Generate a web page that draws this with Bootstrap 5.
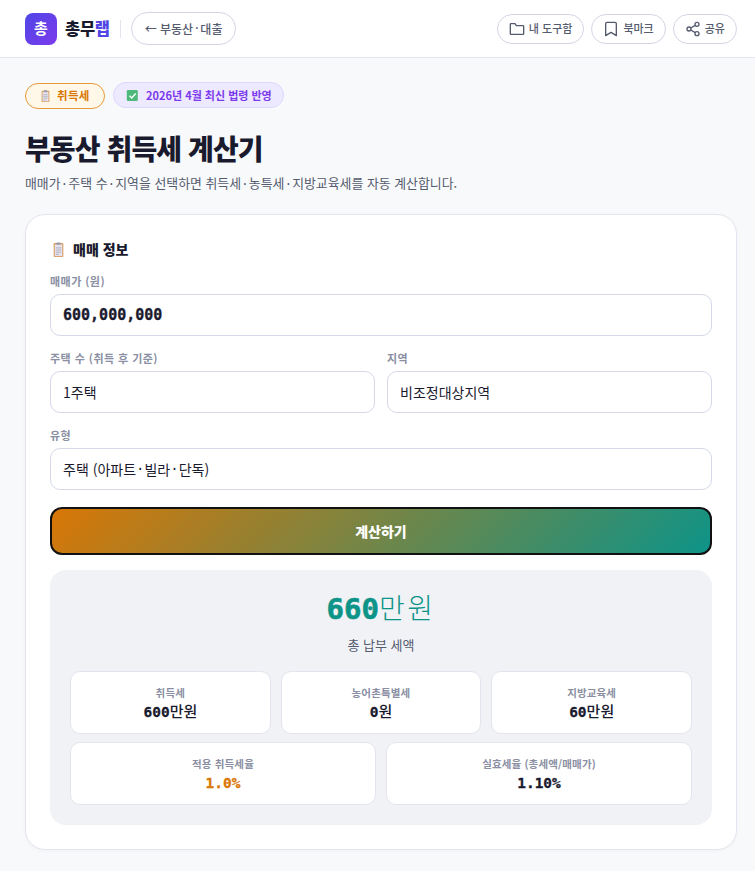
<!DOCTYPE html>
<html lang="ko"><head><meta charset="utf-8">
<title>부동산 취득세 계산기</title>
<link href="https://cdn.jsdelivr.net/npm/bootstrap@5.3.0/dist/css/bootstrap.min.css" rel="stylesheet">
<style>
html,body{height:871px;overflow:hidden}
body{background:#f8f9fb;font-family:"Noto Sans CJK KR","Noto Sans",sans-serif;color:#1a1a2e}
.mid{font-family:"Liberation Mono",monospace;font-weight:inherit}
.topbar{height:58px;background:#fff;border-bottom:1px solid #e4e4ef;padding:0 18px 0 25px}
.logo-box{width:32px;height:32px;border-radius:8px;background:linear-gradient(135deg,#4f46e5,#7c3aed);color:#fff;font-weight:700;font-size:15px}
.logo-text{font-size:16.5px;font-weight:800;margin-left:8px;letter-spacing:-.3px}
.logo-text span{color:#4f46e5}
.vrule{width:1px;height:18px;background:#e4e4ef;margin:0 10px 0 10px}
.back-pill{height:33px;padding:0 13px;border:1px solid #d4d4e4;border-radius:17px;font-size:12px;font-weight:500;color:#555b6e;background:#fff}
.tool-pill{height:30px;padding:0 11px;border:1px solid #d4d4e4;border-radius:15px;font-size:11px;font-weight:500;color:#555b6e;background:#fff;gap:4px}
.tool-row{gap:7px}
.page{padding:25px 18px 0 25px}
.tag-a,.tag-b{height:26px;border-radius:13px;font-size:11px;font-weight:700}
.tag-a{background:#fff8e8;border:1px solid #e8983a;color:#d97706;padding:0 0 0 13px;width:80px;font-size:11.5px;letter-spacing:.3px;margin-top:1px;gap:5px}
.tag-b{background:#ede9fe;border:1px solid #ddd6fe;color:#7c3aed;padding:0 11px 0 12px;gap:7px}
.title-main{font-size:28px;font-weight:800;line-height:34px;letter-spacing:-.9px;margin:22px 0 0;color:#1a1a2e}
.subtitle{font-size:12.9px;color:#555b6e;margin:8px 0 0;line-height:19px}
.calc-card{margin-top:20px;background:#fff;border:1px solid #e4e4ef;border-radius:20px;padding:23px 24px 24px;height:636px;box-shadow:0 1px 4px rgba(0,0,0,.03)}
.sec-head{font-size:14px;font-weight:800;gap:6px;height:22px;margin-bottom:14px}
.fld-label{display:block;font-size:11px;font-weight:600;color:#8a8fa3;line-height:15px;margin-bottom:5px;letter-spacing:.45px}
.fld-box{height:42px;border:1px solid #d4d8e8;border-radius:10px;padding:0 12px;font-size:14px;display:flex;align-items:center;background:#fff;color:#1a1a2e;width:100%}
.fld-num{font-family:"DejaVu Sans Mono",monospace;font-weight:700;font-size:15px;-webkit-text-stroke:.35px currentColor}
.fld-gap{margin-bottom:15px}
.go-btn{height:48px;width:100%;border:2px solid #111;border-radius:12px;background:linear-gradient(135deg,#d97706,#0d9488);color:#fff;font-weight:800;font-size:14px;margin-top:2px}
.result-box{margin-top:15px;background:#f1f2f6;border-radius:16px;height:255px;padding:19px 20px 18px}
.total{font-size:28px;line-height:36px;color:#0d9488;text-align:center;font-family:"DejaVu Sans Mono",monospace}
.total b{font-weight:700;font-size:29px;-webkit-text-stroke:.6px currentColor}
.total span{font-family:"Noto Sans CJK KR",sans-serif;font-weight:300;letter-spacing:2.5px}
.total-cap{font-size:13px;color:#555b6e;text-align:center;margin-top:7px;line-height:20px}
.stat-row{display:grid;gap:10px}
.three{grid-template-columns:repeat(3,1fr);margin-top:16px}
.two{grid-template-columns:repeat(2,1fr);margin-top:8px}
.stat{height:63px;background:#fff;border:1px solid #e4e4ef;border-radius:10px;text-align:center;padding-top:13px}
.stat small{display:block;font-size:10.5px;color:#8a8fa3;line-height:15px;font-weight:600;letter-spacing:.15px}
.stat div{font-size:15px;font-weight:500;line-height:21px;margin-top:0}
.stat b,.stat div.mono{font-family:"DejaVu Sans Mono",monospace;font-weight:700;font-size:14.5px;-webkit-text-stroke:.3px currentColor}
.stat div.mono{margin-top:2px}
.amber{color:#d97706}
</style></head><body>
<svg width="0" height="0" class="d-block" aria-hidden="true"><symbol id="clip" viewBox="0 0 14 14"><rect x="2.5" y="1" width="9" height="13" rx="1" fill="#d99a5f"/><rect x="3.5" y="2.2" width="7" height="11" fill="#e6e2ee"/><rect x="5" y=".4" width="4" height="2.2" rx=".5" fill="#9a9aa8"/><path d="M4.5 5.5h5M4.5 7.5h5M4.5 9.5h5M4.5 11.5h3" stroke="#a8a8b4" stroke-width=".8"/></symbol></svg>
<header class="topbar d-flex align-items-center">
 <div class="logo-box d-flex align-items-center justify-content-center">총</div>
 <div class="logo-text">총무<span>랩</span></div>
 <div class="vrule"></div>
 <a class="back-pill d-flex align-items-center text-decoration-none">← 부동산<span class="mid">·</span>대출</a>
 <div class="ms-auto d-flex tool-row">
  <button class="tool-pill d-flex align-items-center"><svg width="16" height="16" viewBox="0 0 24 24" fill="none" stroke="currentColor" stroke-width="2" stroke-linejoin="round"><path d="M2 19V5a1 1 0 0 1 1-1h6l2 3h10a1 1 0 0 1 1 1v11a1 1 0 0 1-1 1H3a1 1 0 0 1-1-1z"/></svg>내 도구함</button>
  <button class="tool-pill d-flex align-items-center"><svg width="16" height="16" viewBox="0 0 24 24" fill="none" stroke="currentColor" stroke-width="2" stroke-linejoin="round"><path d="M20 22l-8-5-8 5V4a2 2 0 0 1 2-2h12a2 2 0 0 1 2 2z"/></svg>북마크</button>
  <button class="tool-pill d-flex align-items-center"><svg width="16" height="16" viewBox="0 0 24 24" fill="none" stroke="currentColor" stroke-width="2"><circle cx="18" cy="5" r="3"/><circle cx="6" cy="12" r="3"/><circle cx="18" cy="19" r="3"/><path d="M8.6 13.5l6.8 4M15.4 6.5l-6.8 4"/></svg>공유</button>
 </div>
</header>
<main class="page">
 <div class="d-flex align-items-start gap-2" style="margin-top:-1px">
  <span class="tag-a d-inline-flex align-items-center"><svg width="13" height="12"><use href="#clip"/></svg>취득세</span>
  <span class="tag-b d-inline-flex align-items-center"><svg width="13" height="13" viewBox="0 0 13 13"><rect x=".8" y="1" width="11" height="11" rx="1.2" fill="#4fb97c"/><path d="M3.5 6.7l2.2 2.2 4-4.4" stroke="#fff" stroke-width="1.4" fill="none"/></svg>2026년 4월 최신 법령 반영</span>
 </div>
 <h1 class="title-main">부동산 취득세 계산기</h1>
 <p class="subtitle">매매가<span class="mid">·</span>주택 수<span class="mid">·</span>지역을 선택하면 취득세<span class="mid">·</span>농특세<span class="mid">·</span>지방교육세를 자동 계산합니다.</p>
 <section class="calc-card">
  <div class="sec-head d-flex align-items-center"><svg width="17" height="15"><use href="#clip"/></svg>매매 정보</div>
  <div class="fld-gap"><label class="fld-label">매매가 (원)</label><div class="fld-box fld-num">600,000,000</div></div>
  <div class="row g-0 fld-gap" style="column-gap:12px">
   <div class="col"><label class="fld-label">주택 수 (취득 후 기준)</label><div class="fld-box">1주택</div></div>
   <div class="col"><label class="fld-label">지역</label><div class="fld-box">비조정대상지역</div></div>
  </div>
  <div class="fld-gap"><label class="fld-label">유형</label><div class="fld-box">주택 (아파트<span class="mid">·</span>빌라<span class="mid">·</span>단독)</div></div>
  <button class="go-btn">계산하기</button>
  <div class="result-box">
   <div class="total"><b>660</b><span>만원</span></div>
   <div class="total-cap">총 납부 세액</div>
   <div class="stat-row three">
    <div class="stat"><small>취득세</small><div><b>600</b>만원</div></div>
    <div class="stat"><small>농어촌특별세</small><div><b>0</b>원</div></div>
    <div class="stat"><small>지방교육세</small><div><b>60</b>만원</div></div>
   </div>
   <div class="stat-row two">
    <div class="stat"><small>적용 취득세율</small><div class="mono amber">1.0%</div></div>
    <div class="stat"><small>실효세율 (총세액/매매가)</small><div class="mono">1.10%</div></div>
   </div>
  </div>
 </section>
</main>
<script src="https://cdn.jsdelivr.net/npm/bootstrap@5.3.0/dist/js/bootstrap.bundle.min.js"></script>
</body></html>
